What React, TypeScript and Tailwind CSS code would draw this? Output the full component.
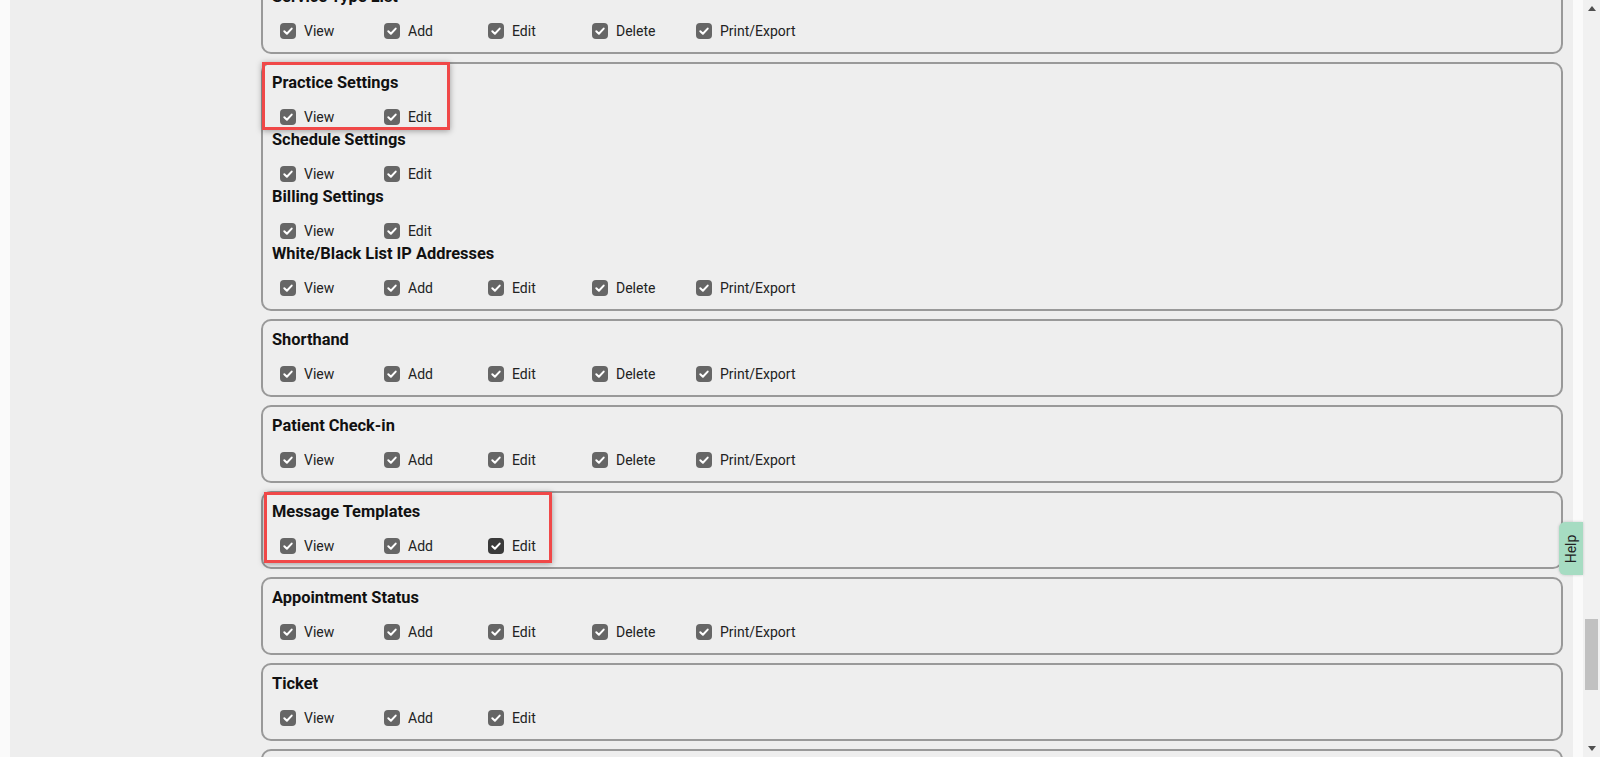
import React from "react";

const ALL = ["View", "Add", "Edit", "Delete", "Print/Export"];

type Section = { title: string; items: string[]; dark?: string };
type Card = { sections: Section[]; highlight?: "practice" | "message" };

const cards: Card[] = [
  { sections: [{ title: "Service Type List", items: ALL }] },
  {
    highlight: "practice",
    sections: [
      { title: "Practice Settings", items: ["View", "Edit"] },
      { title: "Schedule Settings", items: ["View", "Edit"] },
      { title: "Billing Settings", items: ["View", "Edit"] },
      { title: "White/Black List IP Addresses", items: ALL },
    ],
  },
  { sections: [{ title: "Shorthand", items: ALL }] },
  { sections: [{ title: "Patient Check-in", items: ALL }] },
  {
    highlight: "message",
    sections: [{ title: "Message Templates", items: ["View", "Add", "Edit"], dark: "Edit" }],
  },
  { sections: [{ title: "Appointment Status", items: ALL }] },
  { sections: [{ title: "Ticket", items: ["View", "Add", "Edit"] }] },
  { sections: [{ title: "Tasks", items: ALL }] },
];

function Check({ dark }: { dark?: boolean }) {
  return (
    <svg width="16" height="16" viewBox="0 0 16 16" className="shrink-0">
      <rect x="0" y="0" width="16" height="16" rx="4" fill={dark ? "#3a3a3a" : "#666666"} />
      <path
        d="M4.3 8.3 L6.9 10.8 L11.7 5.6"
        fill="none"
        stroke="#ffffff"
        strokeWidth="2"
        strokeLinecap="round"
        strokeLinejoin="round"
      />
    </svg>
  );
}

function SectionBlock({ s, idx }: { s: Section; idx: number }) {
  return (
    <div className={idx > 0 ? "mt-[3px]" : ""}>
      <div className="h-[20px] leading-[20px] text-[16.4px] font-bold text-[#111111] whitespace-nowrap">{s.title}</div>
      <div className="mt-[14px] h-[20px] flex items-center pl-[8px]">
        {s.items.map((it) => (
          <div key={it} className="w-[104px] flex items-center gap-[8px]">
            <Check dark={s.dark === it} />
            <span className="text-[14px] leading-[20px] text-[#222222]">{it}</span>
          </div>
        ))}
      </div>
    </div>
  );
}

export default function App() {
  return (
    <div
      className="relative w-[1600px] h-[757px] overflow-hidden flex bg-[#fafafa]"
      style={{ fontFamily: "Roboto, 'Liberation Sans', Arial, sans-serif" }}
    >
      <div className="w-[10px] shrink-0 bg-[#fafafa]" />
      <div className="w-[1563px] shrink-0 bg-[#eeeeee] pl-[251px] pr-[10px] overflow-hidden">
        <div className="mt-[-24px] flex flex-col gap-[8px]">
          {cards.map((c, i) => (
            <div
              key={i}
              className="relative border-2 border-[#999999] rounded-[10px] bg-[#eeeeee] pl-[9px] pt-[9px] pb-[11px]"
            >
              {c.sections.map((s, j) => (
                <SectionBlock key={j} s={s} idx={j} />
              ))}
              {c.highlight === "practice" && (
                <div className="absolute left-[-1px] top-[-2px] w-[188px] h-[68px] border-[3px] border-[#f04848] shadow-[0_1px_6px_rgba(0,0,0,0.35)] pointer-events-none" />
              )}
              {c.highlight === "message" && (
                <div className="absolute left-[1px] top-[-1px] w-[288px] h-[71px] border-[3px] border-[#f04848] shadow-[0_1px_6px_rgba(0,0,0,0.35)] pointer-events-none" />
              )}
            </div>
          ))}
        </div>
      </div>
      <div className="w-[10px] shrink-0 bg-[#fafafa]" />
      <div className="w-[17px] shrink-0 bg-[#f1f1f1] flex flex-col items-center">
        <div className="h-[17px] flex items-center justify-center">
          <svg width="8" height="5" viewBox="0 0 8 5">
            <path d="M0 5 L4 0 L8 5 Z" fill="#505050" />
          </svg>
        </div>
        <div className="mt-[602px] w-[13px] h-[71px] bg-[#c1c1c1]" />
        <div className="mt-auto h-[17px] flex items-center justify-center">
          <svg width="8" height="5" viewBox="0 0 8 5">
            <path d="M0 0 L8 0 L4 5 Z" fill="#505050" />
          </svg>
        </div>
      </div>
      <div className="absolute left-[1559px] top-[522px] w-[24px] h-[53px] bg-[#a6dcc2] rounded-l-[6px] shadow-[0_0_3px_rgba(0,0,0,0.2)] flex items-center justify-center">
        <span className="-rotate-90 text-[14px] text-[#222222] leading-none whitespace-nowrap">Help</span>
      </div>
    </div>
  );
}
